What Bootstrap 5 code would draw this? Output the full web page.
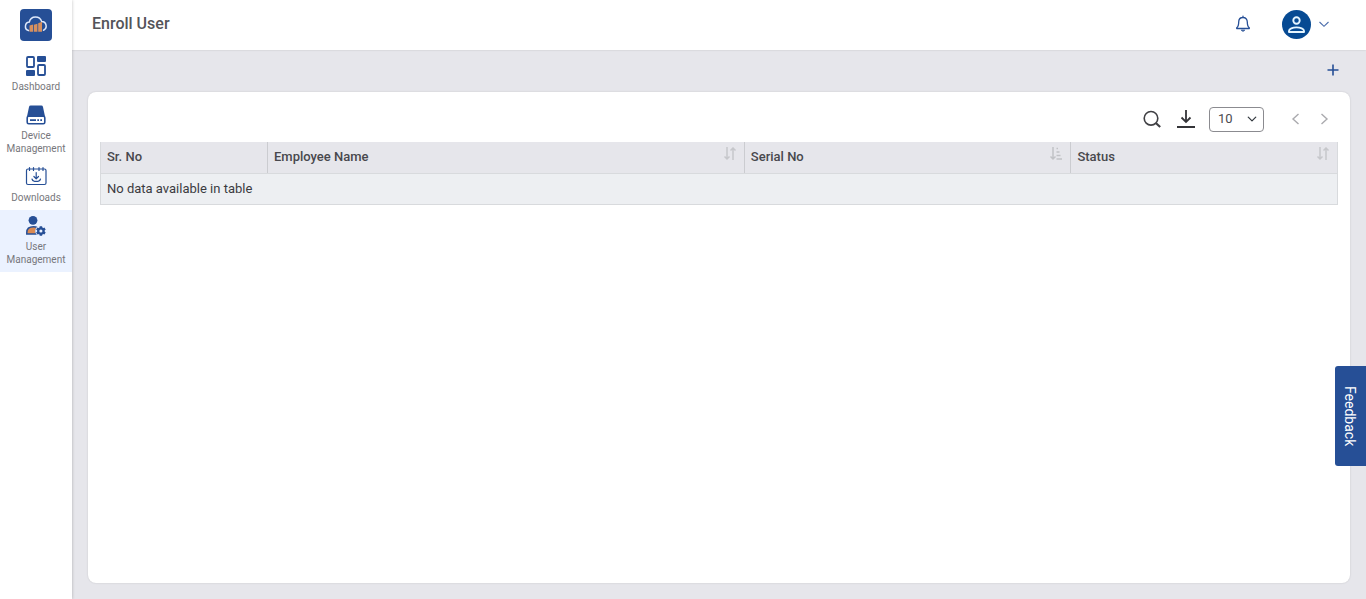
<!DOCTYPE html>
<html lang="en">
<head>
<meta charset="utf-8">
<meta name="viewport" content="width=device-width, initial-scale=1">
<title>Enroll User</title>
<link href="https://cdn.jsdelivr.net/npm/bootstrap@5.3.0/dist/css/bootstrap.min.css" rel="stylesheet">
<style>
  :root { --brand: #264f96; --page: #e6e6eb; --rule: #d8dadd; }
  body { font-family: Roboto, "Liberation Sans", sans-serif; background: var(--page); color: #3b3b3f; font-size: 13px; }
  svg { display: block; flex: none; }
  .sidebar { width: 72px; box-shadow: 0 0 3px rgba(0,0,0,.25); z-index: 1; }
  .brand-link { height: 50px; }
  .side-link { padding: 5px 0 6px; gap: 3px; font-size: 10px; line-height: 13px; color: #77777c; }
  .side-link.active { background: #ebf2ff; }
  .topbar { height: 50px; padding: 0 37px 2px 20px; box-shadow: 0 0 2px rgba(0,0,0,.15); }
  .page-title { font-size: 16px; line-height: 20px; font-weight: 500; color: #545459; }
  .actions { height: 42px; padding: 0 26px 2px; }
  .panel { margin: 0 16px 16px; padding: 12px; border-radius: 8px; box-shadow: 0 0 2px rgba(0,0,0,.15); }
  .tools { height: 30px; padding-right: 8px; margin-bottom: 8px; }
  .search-btn, .download-btn { margin-right: 16px; }
  .download-btn { margin-right: 14px; }
  .pager { gap: 16px; padding-left: 26px; }
  .length-select { width: 55px; height: 25px; padding: 0 0 0 8px; font-size: 13px; color: #4b4b4f; border: 1px solid #8b8b90; border-radius: 4px; background-position: right 6px center; background-size: 10px 10px; }
  .data-table { --bs-table-bg: transparent; table-layout: fixed; border: 1px solid var(--rule); border-top: 0; line-height: 19px; }
  .data-table th { padding: 5px 6px 7px; background: var(--page); font-weight: 500; color: #48484d; border-bottom: 1px solid var(--rule); }
  .data-table th + th { border-left: 1px solid #cbccd0; }
  .data-table td { padding: 5px 6px 6px; background: #edeff2; color: #3b3b3f; border-bottom: 0; }
  .data-table svg { margin-right: 1px; }
  .col-no { width: 13.5%; } .col-name { width: 38.55%; } .col-serial { width: 26.4%; }
  .feedback { right: 0; top: 366px; width: 31px; height: 100px; padding: 0; border-radius: 3px 0 0 3px; background: var(--brand); color: #fff; font-size: 14px; line-height: 33px; writing-mode: vertical-rl; text-align: center; z-index: 5; }
  .feedback:hover { background: #1c3f7d; color: #fff; }
</style>
</head>
<body>
<div class="d-flex min-vh-100">
  <nav class="sidebar bg-white flex-shrink-0" aria-label="Main">
    <a href="#" class="brand-link d-flex align-items-center justify-content-center" aria-label="Home">
      <svg width="32" height="32" viewBox="0 0 32 32"><rect width="32" height="32" rx="4" fill="#264f96"/><path d="M8.500 21.500a4.300 4.300 0 0 1 .8-8.400C10 9.700 12.600 8 15.500 8c3 0 5.300 1.500 6.200 4.600a4.500 4.500 0 0 1 1.800 8.600" fill="none" stroke="#dfe9fb" stroke-width="1.500" stroke-linecap="round"/><path d="M9.500 16.500l3.600-1v7.200H9.500zM13.900 15.700l3.500-1v8h-3.500zM18.200 14.200l3.800-1.500v10h-3.800z" fill="#d6905f"/></svg>
    </a>
    <a href="#" class="side-link d-flex flex-column align-items-center text-center text-decoration-none">
      <svg width="22" height="22" viewBox="0 0 22 22" fill="none" stroke="#264f96" stroke-width="1.800"><rect x="2" y="2" width="7" height="10" rx="1"/><rect x="13" y="10" width="7" height="10" rx="1"/><path fill="#264f96" stroke="none" d="M13 1h7a1 1 0 0 1 1 1v4a1 1 0 0 1-1 1h-7a1 1 0 0 1-1-1V2a1 1 0 0 1 1-1zM2 15h7a1 1 0 0 1 1 1v4a1 1 0 0 1-1 1H2a1 1 0 0 1-1-1v-4a1 1 0 0 1 1-1z"/></svg>
      <span>Dashboard</span>
    </a>
    <a href="#" class="side-link d-flex flex-column align-items-center text-center text-decoration-none">
      <svg width="22" height="22" viewBox="0 0 22 22" fill="#264f96"><path d="M5.700 1.500h10.600q1.400 0 1.700 1.400L20 12.500H2L4 2.900q.3-1.400 1.700-1.400z"/><rect x="2.200" y="12.200" width="17.600" height="7.600" rx="1.500" fill="#fff" stroke="#264f96" stroke-width="1.600"/><path d="M5 15.200h6v1.700H5zM12.300 15.200H14v1.700h-1.700zM15.300 15.200H17v1.700h-1.700z"/></svg>
      <span>Device<br>Management</span>
    </a>
    <a href="#" class="side-link d-flex flex-column align-items-center text-center text-decoration-none">
      <svg width="22" height="22" viewBox="0 0 22 22" fill="none" stroke="#264f96" stroke-width="1.200" stroke-linecap="round" stroke-linejoin="round"><rect x="1.500" y="3" width="19.500" height="15.500" rx="1.500"/><path d="M4.500 1.500v3M8.500 1.500v3M14 1.500v3M18 1.500v3M11.200 6.500v6M8.900 10.500l2.300 2.300 2.300-2.300M7 13q.5 2.300 2.500 2.300h3.500q2 0 2.500-2.300"/></svg>
      <span>Downloads</span>
    </a>
    <a href="#" class="side-link active d-flex flex-column align-items-center text-center text-decoration-none" aria-current="page">
      <svg width="22" height="22" viewBox="0 0 22 22"><circle cx="8" cy="5.300" r="4.400" fill="#264f96"/><path d="M1.800 19v-1.500C1.800 13.500 4.500 11.800 8.500 11.800c1.700 0 3 .3 4 .8-1.500 1.500-2 3.700-1.200 6.400z" fill="#db8a52" stroke="#264f96" stroke-width="1.500"/><circle cx="15.900" cy="16" r="5.700" fill="#ebf2ff"/><circle cx="15.900" cy="16" r="2.700" fill="none" stroke="#264f96" stroke-width="2.300"/><path d="M15.900 11.200v1.700M15.900 19.100v1.700M11.700 13.600l1.500.8M18.600 17.600l1.500.8M11.700 18.400l1.500-.8M18.600 14.400l1.500-.8" stroke="#264f96" stroke-width="2.500"/></svg>
      <span>User<br>Management</span>
    </a>
  </nav>

  <div class="flex-grow-1 d-flex flex-column">
    <header class="topbar bg-white d-flex align-items-center">
      <h1 class="page-title m-0 me-auto">Enroll User</h1>
      <button type="button" class="btn p-0 border-0 me-4" aria-label="Notifications">
        <svg width="22" height="22" viewBox="0 0 22 22" fill="none" stroke="#264f96" stroke-width="1.300" stroke-linejoin="round" stroke-linecap="round"><path d="M11 4.500c-2.600 0-4.300 1.900-4.300 4.500 0 3.500-.5 4.800-2 5.700v.8h12.600v-.8c-1.500-.9-2-2.200-2-5.700 0-2.600-1.700-4.500-4.300-4.500zM11 3.200v1.300"/><path d="M9.300 17.300a1.800 1.600 0 0 0 3.400 0z" fill="#264f96" stroke-width=".6"/></svg>
      </button>
      <button type="button" class="btn p-0 border-0 d-flex align-items-center gap-2 ms-1" aria-label="Account menu">
        <svg width="29" height="29" viewBox="0 0 29 29"><circle cx="14.500" cy="14.500" r="14.500" fill="#064a93"/><g fill="none" stroke="#e6f6ff" stroke-width="1.900"><circle cx="14.500" cy="10.500" r="3.200"/><path d="M7 22v-1c0-2.200 3.700-3.600 7.500-3.600S22 18.800 22 21v1z" stroke-linejoin="round"/></g></svg>
        <svg width="10" height="8" viewBox="0 0 10 8" fill="none" stroke="#4b6dab" stroke-width="1.100"><path d="M.5 2L5 6.300 9.500 2"/></svg>
      </button>
    </header>

    <main class="flex-grow-1 d-flex flex-column">
      <div class="actions d-flex align-items-center justify-content-end">
        <button type="button" class="btn p-0 border-0" aria-label="Add user">
          <svg width="14" height="14" viewBox="0 0 14 14" stroke="#264f96" stroke-width="1.600"><path d="M7 1.500v11M1.500 7h11"/></svg>
        </button>
      </div>
      <section class="panel bg-white flex-grow-1">
        <div class="tools d-flex align-items-center justify-content-end">
          <button type="button" class="btn p-0 border-0 search-btn" aria-label="Search">
            <svg width="18" height="18" viewBox="0 0 18 18" fill="none" stroke="#404044" stroke-width="1.600"><circle cx="8" cy="8.300" r="6.800"/><path d="M12.800 13l4.400 4" stroke-width="2.200"/></svg>
          </button>
          <button type="button" class="btn p-0 border-0 download-btn" aria-label="Download">
            <svg width="18" height="20" viewBox="0 0 18 20" fill="none" stroke="#343438" stroke-width="1.800"><path d="M9 1v12M4.500 8.500L9 13l4.500-4.500M0 18h18"/></svg>
          </button>
          <select id="page-length" class="form-select length-select" aria-label="Rows per page">
            <option selected>10</option><option>25</option><option>50</option><option>100</option>
          </select>
          <div class="pager d-flex">
            <button type="button" class="btn p-0 border-0" aria-label="Previous page"><svg width="12" height="12" viewBox="0 0 12 12" fill="none" stroke="#aaaaae" stroke-width="1.400"><path d="M8.500 1L3 6l5.500 5"/></svg></button>
            <button type="button" class="btn p-0 border-0" aria-label="Next page"><svg width="12" height="12" viewBox="0 0 12 12" fill="none" stroke="#aaaaae" stroke-width="1.400"><path d="M3.500 1L9 6l-5.500 5"/></svg></button>
          </div>
        </div>
        <table class="table data-table mb-0">
          <thead>
            <tr>
              <th scope="col" class="col-no">Sr. No</th>
              <th scope="col" class="col-name"><div class="d-flex justify-content-between">Employee Name
                <svg width="14" height="14" viewBox="0 0 14 14" fill="none" stroke="#c6c7cb" stroke-width="1.500"><path d="M4 0v12M1.500 9.500L4 12l2.500-2.500M10 13V1M7.500 3.500L10 1l2.500 2.500"/></svg></div></th>
              <th scope="col" class="col-serial" aria-sort="ascending"><div class="d-flex justify-content-between">Serial No
                <svg width="14" height="14" viewBox="0 0 14 14" fill="none" stroke="#c1c2c6" stroke-width="1.500"><path d="M4 0v12M1.500 9.500L4 12l2.500-2.500M7.500 1.500H9M7.500 5h3M7.500 8.500h4M7.500 12H13"/></svg></div></th>
              <th scope="col"><div class="d-flex justify-content-between">Status
                <svg width="14" height="14" viewBox="0 0 14 14" fill="none" stroke="#c6c7cb" stroke-width="1.500"><path d="M4 0v12M1.500 9.500L4 12l2.500-2.500M10 13V1M7.500 3.500L10 1l2.500 2.500"/></svg></div></th>
            </tr>
          </thead>
          <tbody>
            <tr><td colspan="4">No data available in table</td></tr>
          </tbody>
        </table>
      </section>
    </main>
  </div>
</div>
<button type="button" class="btn border-0 position-fixed feedback">Feedback</button>
<script src="https://cdn.jsdelivr.net/npm/bootstrap@5.3.0/dist/js/bootstrap.bundle.min.js"></script>
</body>
</html>
